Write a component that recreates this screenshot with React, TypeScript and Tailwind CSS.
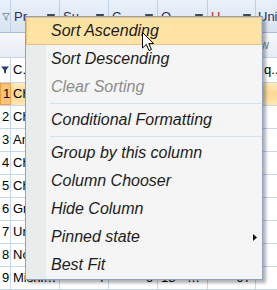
import React from "react";

type Row = [string, string, string, string, string, string];

const rows: Row[] = [
  ["Chai", "1", "1", "10 boxes x 20 bags", "18", "39"],
  ["Chang", "1", "1", "24 - 12 oz bottles", "19", "17"],
  ["Aniseed Syrup", "1", "2", "12 - 550 ml bottles", "10", "13"],
  ["Chef Anton's Cajun Seasoning", "2", "2", "48 - 6 oz jars", "22", "53"],
  ["Chef Anton's Gumbo Mix", "2", "2", "36 boxes", "21.35", "0"],
  ["Grandma's Boysenberry Spread", "3", "2", "12 - 8 oz jars", "25", "120"],
  ["Uncle Bob's Organic Dried Pears", "3", "7", "12 - 1 lb pkgs.", "30", "15"],
  ["Northwoods Cranberry Sauce", "3", "2", "12 - 12 oz jars", "40", "6"],
  ["Mishi Kobe Niku", "4", "6", "18 - 500 g pkgs.", "97", "29"],
];

const gridCols = "grid grid-cols-[11px_49px_49px_49px_50px_48px_60px]";

function Funnel({ dark }: { dark?: boolean }) {
  return (
    <svg width="8" height="8" viewBox="0 0 8 8">
      {dark ? (
        <path d="M0 0.5 H8 L5 4 V7.5 L3 6.5 V4 Z" fill="#1F3F73" />
      ) : (
        <path d="M0.5 0.5 H7.5 L4.8 3.8 V7.2 L3.2 6.4 V3.8 Z" fill="none" stroke="#7E93B0" strokeWidth="1" />
      )}
    </svg>
  );
}

function HeaderCell({ text, red }: { text: string; red?: boolean }) {
  return (
    <div className="flex items-center h-full border-r border-[#BFD0E6] pl-[3px] pr-[4px] pt-[2px] gap-1 overflow-hidden">
      <span className={`flex-1 overflow-hidden whitespace-nowrap text-ellipsis ${red ? "text-[#A8322C]" : "text-[#2E2A5C]"}`}>
        {text}
      </span>
      <span className="shrink-0 w-[8px] h-[7px] border border-[#6D7C92] border-t-2 border-t-[#3C4757] bg-[#EEF2F8]" />
    </div>
  );
}

function MenuItem({ label, disabled, active, sub }: { label: string; disabled?: boolean; active?: boolean; sub?: boolean }) {
  return (
    <div
      className={`h-[28px] flex items-center ${
        active ? "border border-[#F2C07C] bg-[#FFE3A4] pl-[24px]" : "pl-[25px]"
      } ${disabled ? "text-[#8C8C8C]" : "text-[#1C1C1C]"}`}
    >
      <span className="flex-1">{label}</span>
      {sub && (
        <svg width="4" height="7" viewBox="0 0 4 7" className="mr-[5px]">
          <path d="M0 0 L4 3.5 L0 7 Z" fill="#111" />
        </svg>
      )}
    </div>
  );
}

function Separator() {
  return (
    <div className="h-[5px] flex items-center pl-[24px]">
      <div className="h-px w-full bg-[#D4DFF0]" />
    </div>
  );
}

export default function App() {
  return (
    <div className="relative w-[277px] h-[290px] overflow-hidden bg-white font-['Liberation_Sans',Arial,sans-serif] text-[13px]">
      {/* header */}
      <div className={`${gridCols} h-[33px] bg-gradient-to-b from-[#E9F0F9] to-[#D9E4F2] border-b border-[#A9BED9]`}>
        <div className="flex items-center justify-center border-r border-[#BFD0E6] pl-px pt-[2px]">
          <Funnel />
        </div>
        <HeaderCell text="ProductName" />
        <HeaderCell text="SupplierID" />
        <HeaderCell text="CategoryID" />
        <HeaderCell text="QuantityPerUnit" />
        <HeaderCell text="UnitPrice" red />
        <div className="flex items-center pl-[2px] pt-[2px] text-[#2E2A5C] whitespace-nowrap overflow-hidden">UnitsInStock</div>
      </div>

      {/* new row band */}
      <div className="h-[25px] flex items-center justify-end pr-[8px] bg-gradient-to-b from-[#F6F8FB] to-[#E6ECF4] border-b border-[#C6D6EC] text-[12px] text-[#72839A] whitespace-nowrap">
        Click here to add new row
      </div>

      {/* filter row */}
      <div className={`${gridCols} h-[25px] border-b border-[#C6D6EC]`}>
        <div className="flex items-center pl-[1px] border-r border-[#C6D6EC]">
          <Funnel dark />
        </div>
        <div className="flex items-center pl-[2px] border-r border-[#C6D6EC]">C...</div>
        <div className="border-r border-[#C6D6EC]" />
        <div className="border-r border-[#C6D6EC]" />
        <div className="border-r border-[#C6D6EC]" />
        <div className="border-r border-[#C6D6EC]" />
        <div className="flex items-center pl-[8px]">q...</div>
      </div>

      {/* data rows */}
      {rows.map((r, i) => {
        const current = i === 0;
        return (
          <div
            key={i}
            className={`${gridCols} h-[23px] border-b border-[#C6D6EC] ${
              current ? "bg-gradient-to-b from-[#FFEBB9] via-[#FDD894] to-[#FFE8B4]" : "bg-white"
            }`}
          >
            <div
              className={`flex items-center pl-[2px] ${
                current ? "bg-[#FBC47B] border border-[#EE9F3F]" : "border-r border-[#C6D6EC]"
              }`}
            >
              {i + 1}
            </div>
            <div className="flex items-center pl-[2px] pr-[2px] border-r border-[#C6D6EC] overflow-hidden">
              <span className="overflow-hidden whitespace-nowrap text-ellipsis">{r[0]}</span>
            </div>
            <div className="flex items-center justify-end pr-[4px] border-r border-[#C6D6EC]">{r[1]}</div>
            <div className="flex items-center justify-end pr-[4px] border-r border-[#C6D6EC]">{r[2]}</div>
            <div className="flex items-center pl-[3px] pr-[2px] border-r border-[#C6D6EC] overflow-hidden">
              <span className="overflow-hidden whitespace-nowrap text-ellipsis">{r[3]}</span>
            </div>
            <div className="flex items-center justify-end pr-[4px] border-r border-[#C6D6EC]">{r[4]}</div>
            <div className="flex items-center justify-end pr-[4px]">{r[5]}</div>
          </div>
        );
      })}

      {/* context menu */}
      <div className="absolute left-[25px] top-[16px] w-[238px] border border-[#8DA2C2] bg-[linear-gradient(to_right,#E8ECEB_20px,#F5F5F5_20px)] shadow-[3px_3px_3px_rgba(0,0,0,0.3)] italic text-[16px]">
        <MenuItem label="Sort Ascending" active />
        <MenuItem label="Sort Descending" />
        <MenuItem label="Clear Sorting" disabled />
        <Separator />
        <MenuItem label="Conditional Formatting" />
        <Separator />
        <MenuItem label="Group by this column" />
        <MenuItem label="Column Chooser" />
        <MenuItem label="Hide Column" />
        <MenuItem label="Pinned state" sub />
        <MenuItem label="Best Fit" />
      </div>

      {/* mouse pointer */}
      <svg className="absolute left-[142px] top-[32px]" width="13" height="20" viewBox="0 0 13 20">
        <path d="M0.5 0.5 V16 L4.3 12.4 L7 18.5 L9.4 17.4 L6.8 11.6 L11.7 11.6 Z" fill="#fff" stroke="#000" strokeWidth="1" />
      </svg>
    </div>
  );
}
